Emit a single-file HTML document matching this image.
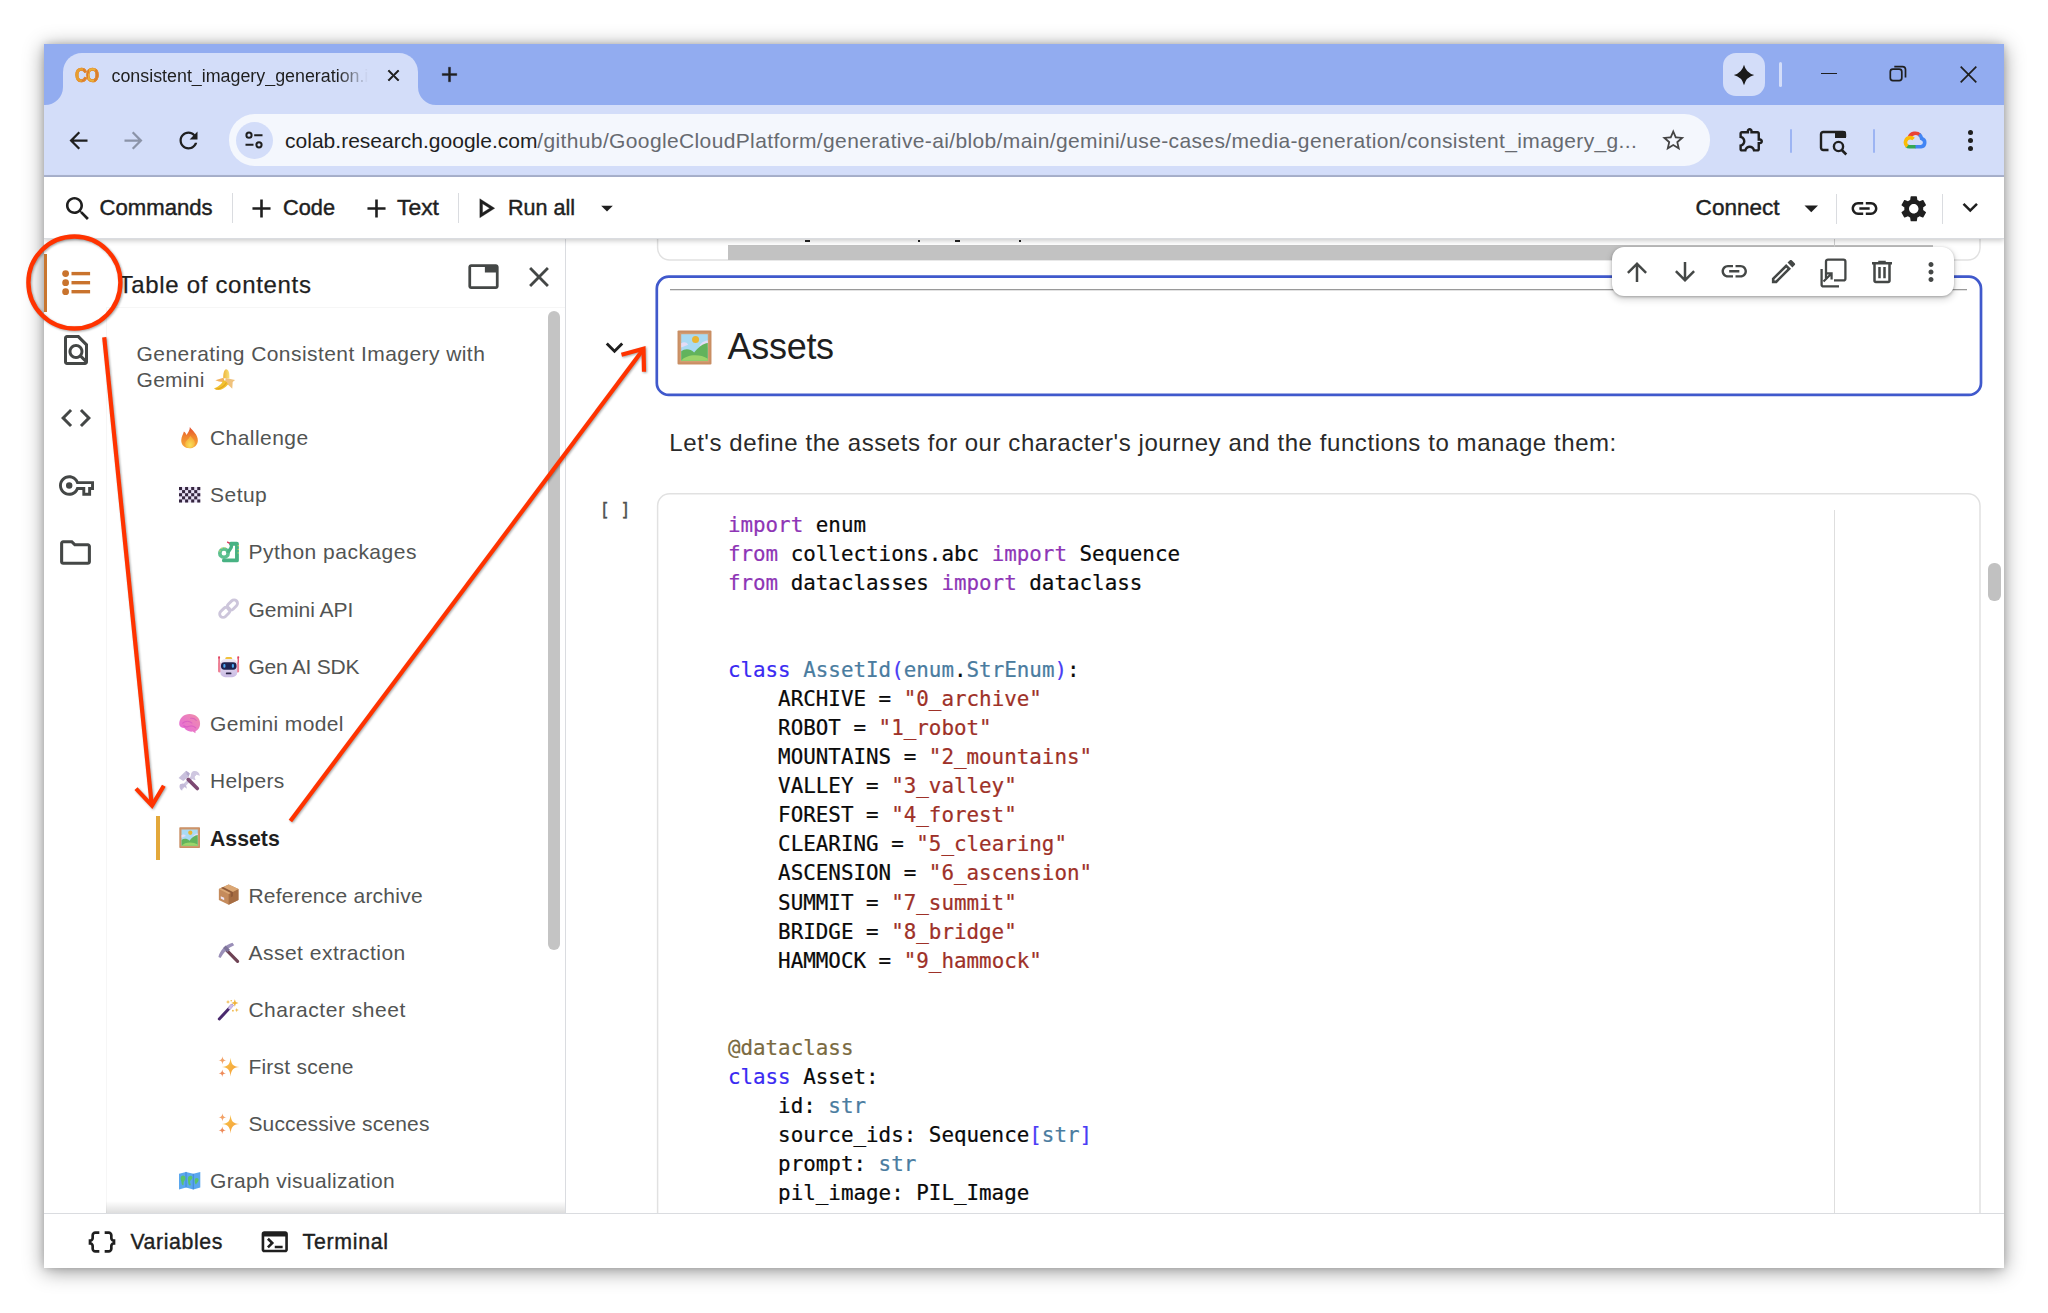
<!DOCTYPE html>
<html>
<head>
<meta charset="utf-8">
<title>consistent_imagery_generation.ipynb - Colab</title>
<style>
*{box-sizing:border-box;margin:0;padding:0}
html,body{width:2048px;height:1313px;background:#fff;overflow:hidden}
body{font-family:"Liberation Sans",sans-serif;color:#1f1f1f;position:relative}
.abs{position:absolute}
#win{position:absolute;left:44px;top:44px;width:1960px;height:1224px;background:#fff;box-shadow:0 3px 19px rgba(0,0,0,.42),0 0 7px rgba(0,0,0,.15)}
#clip{position:absolute;left:0;top:0;width:1960px;height:1224px;overflow:hidden}
#pg{position:absolute;left:-44px;top:-44px;width:2048px;height:1313px}
#ann{position:absolute;left:0;top:0;width:2048px;height:1313px;pointer-events:none}
.t{position:absolute;white-space:pre;line-height:1}
</style>
</head>
<body>
<div id="win"><div id="clip"><div id="pg">
<!-- chrome -->
<div class="abs" style="left:44.00px;top:44.00px;width:1960.00px;height:61.00px;background:#92acf0"></div>
<div class="abs" style="left:44.00px;top:105.00px;width:1960.00px;height:71.00px;background:#d3ddf9"></div>
<div class="abs" style="left:44.00px;top:175.00px;width:1960.00px;height:1.50px;background:#aab3cf"></div>
<div class="abs" style="left:63.00px;top:53.00px;width:355.00px;height:52.00px;background:#d3ddf9;border-radius:19px 19px 0 0"></div>
<svg class="abs" style="left:45px;top:87px" width="18" height="18" viewBox="0 0 18 18"><path fill="#d3ddf9" d="M18 0V18H0A18 18 0 0 0 18 0z"/></svg>
<svg class="abs" style="left:418px;top:87px" width="18" height="18" viewBox="0 0 18 18"><path fill="#d3ddf9" d="M0 0V18H18A18 18 0 0 1 0 0z"/></svg>
<div class="t" style="left:74.60px;top:64.40px;font-size:21.00px;font-weight:700;letter-spacing:-1.500px;transform:scaleX(.80);transform-origin:0 50%;padding-right:4px;-webkit-text-stroke:0.7px #e38a2c;background:linear-gradient(100deg,#e7a12f 0 30%,#dc7d2b 31% 50%,#ebb238 51% 72%,#da7c2d 73%);-webkit-background-clip:text;background-clip:text;color:transparent">CO</div>
<div class="t" style="left:111.50px;top:68.08px;font-size:17.85px;color:#1f1f1f;width:262px;overflow:hidden;-webkit-mask-image:linear-gradient(90deg,#000 0,#000 226px,transparent 256px);mask-image:linear-gradient(90deg,#000 0,#000 226px,transparent 256px)">consistent_imagery_generation.ipynb - Colab</div>
<svg class="abs" style="left:383.50px;top:65.70px" width="19.00" height="19.00" viewBox="0 0 24 24"><path fill="#1f1f1f" stroke="#1f1f1f" stroke-width="0.9" d="M19 6.41L17.59 5 12 10.59 6.41 5 5 6.41 10.59 12 5 17.59 6.41 19 12 13.41 17.59 19 19 17.59 13.41 12z"/></svg>
<svg class="abs" style="left:436.50px;top:62.10px" width="25.00" height="25.00" viewBox="0 0 24 24"><path fill="#1f1f1f" stroke="#1f1f1f" stroke-width="0.35" d="M19 13h-6v6h-2v-6H5v-2h6V5h2v6h6v2z"/></svg>
<div class="abs" style="left:1722.50px;top:53.00px;width:42.50px;height:42.50px;background:#d3ddf9;border-radius:13px"></div>
<svg class="abs" style="left:1732.00px;top:63.00px" width="24.00" height="24.00" viewBox="0 0 24 24"><path fill="#1a1a1a" d="M12 1.8Q14 10 22.2 12Q14 14 12 22.2Q10 14 1.8 12Q10 10 12 1.8z"/></svg>
<div class="abs" style="left:1778.60px;top:62.00px;width:3.20px;height:24.50px;background:#d3ddf9;border-radius:2px"></div>
<div class="abs" style="left:1820.50px;top:72.80px;width:16.00px;height:1.70px;background:#1f1f1f"></div>
<svg class="abs" style="left:1888.00px;top:64.00px" width="20.00" height="20.00" viewBox="0 0 20 20"><rect x="2.3" y="5.2" width="11.5" height="11.5" rx="2.6" fill="none" stroke="#1f1f1f" stroke-width="1.7"/><path d="M6.3 2.6H14.5A3 3 0 0 1 17.5 5.6V13.6" fill="none" stroke="#1f1f1f" stroke-width="1.7"/></svg>
<svg class="abs" style="left:1960.00px;top:66.00px" width="17.00" height="17.00" viewBox="0 0 17 17"><path d="M0.7 0.7L16.3 16.3M16.3 0.7L0.7 16.3" stroke="#1f1f1f" stroke-width="1.7" fill="none"/></svg>
<svg class="abs" style="left:64.50px;top:126.50px" width="27.00" height="27.00" viewBox="0 0 24 24"><path fill="#1f1f1f" d="M20 11H7.83l5.59-5.59L12 4l-8 8 8 8 1.41-1.41L7.83 13H20v-2z"/></svg>
<svg class="abs" style="left:119.50px;top:126.50px" width="27.00" height="27.00" viewBox="0 0 24 24"><path fill="#8b93a8" d="M12 4l-1.41 1.41L16.17 11H4v2h12.17l-5.58 5.59L12 20l8-8z"/></svg>
<svg class="abs" style="left:174.50px;top:126.50px" width="27.00" height="27.00" viewBox="0 0 24 24"><path fill="#1f1f1f" d="M17.65 6.35C16.2 4.9 14.21 4 12 4c-4.42 0-7.99 3.58-7.99 8s3.57 8 7.99 8c3.73 0 6.84-2.55 7.73-6h-2.08c-.82 2.33-3.04 4-5.65 4-3.31 0-6-2.69-6-6s2.69-6 6-6c1.66 0 3.14.69 4.22 1.78L13 11h7V4l-2.35 2.35z"/></svg>
<div class="abs" style="left:229.00px;top:114.40px;width:1481.00px;height:51.40px;background:#f4f7fd;border-radius:25.7px"></div>
<div class="abs" style="left:235.50px;top:121.50px;width:37.00px;height:37.00px;background:#d3ddf9;border-radius:50%"></div>
<svg class="abs" style="left:242.00px;top:128.00px" width="24.00" height="24.00" viewBox="0 0 24 24"><g fill="none" stroke="#1f1f1f" stroke-width="2"><circle cx="7" cy="7.2" r="2.6"/><path d="M12.2 7.2H20.5M3.5 16.8H11.5"/><circle cx="17" cy="16.8" r="2.6"/></g></svg>
<div class="t" style="left:285.00px;top:130.00px;font-size:21.00px;color:#1f1f1f;letter-spacing:0.015px">colab.research.google.com</div>
<div class="t" style="left:537.30px;top:130.00px;font-size:21.00px;color:#676a70;letter-spacing:0.367px">/github/GoogleCloudPlatform/generative-ai/blob/main/gemini/use-cases/media-generation/consistent_imagery_g...</div>
<svg class="abs" style="left:1660.25px;top:127.25px" width="26.50" height="26.50" viewBox="0 0 24 24"><path fill="#444" d="M22 9.24l-7.19-.62L12 2 9.19 8.63 2 9.24l5.46 4.73L5.82 21 12 17.27 18.18 21l-1.63-7.03L22 9.24zM12 15.4l-3.76 2.27 1-4.28-3.32-2.88 4.38-.38L12 6.1l1.71 4.04 4.38.38-3.32 2.88 1 4.28L12 15.4z"/></svg>
<svg class="abs" style="left:1736.50px;top:125.00px" width="29.00" height="29.00" viewBox="0 0 24 24"><path fill="#1f1f1f" d="M10.5 4.5c.28 0 .5.22.5.5v2h6v6h2c.28 0 .5.22.5.5s-.22.5-.5.5h-2v6h-2.12c-.68-1.75-2.39-3-4.38-3s-3.7 1.25-4.38 3H4v-2.12c1.75-.68 3-2.39 3-4.38 0-1.99-1.24-3.7-2.99-4.38L4 7h6V5c0-.28.22-.5.5-.5m0-2C9.12 2.5 8 3.62 8 5H4c-1.1 0-1.99.9-1.99 2v3.8h.29c1.49 0 2.7 1.21 2.7 2.7s-1.21 2.7-2.7 2.7H2V20c0 1.1.9 2 2 2h3.8v-.3c0-1.49 1.21-2.7 2.7-2.7s2.7 1.21 2.7 2.7v.3H17c1.1 0 2-.9 2-2v-4c1.38 0 2.5-1.12 2.5-2.5S20.38 11 19 11V7c0-1.1-.9-2-2-2h-4c0-1.38-1.12-2.5-2.5-2.5z"/></svg>
<div class="abs" style="left:1789.80px;top:129.00px;width:2.60px;height:23.50px;background:#9db4f3;border-radius:1.3px"></div>
<svg class="abs" style="left:1818.00px;top:128.00px" width="30.00" height="28.00" viewBox="0 0 30 28"><path d="M10.5 22H5.2A2.2 2.2 0 0 1 3 19.8V6.2A2.2 2.2 0 0 1 5.2 4H24.8A2.2 2.2 0 0 1 27 6.2V9" fill="none" stroke="#1f1f1f" stroke-width="2.4"/><path d="M17 3H26A2 2 0 0 1 28 5V10H17z" fill="#1f1f1f"/><circle cx="20.5" cy="18.5" r="4.6" fill="none" stroke="#1f1f1f" stroke-width="2.4"/><path d="M23.8 22L28.3 26.5" stroke="#1f1f1f" stroke-width="2.6" fill="none"/></svg>
<div class="abs" style="left:1872.80px;top:129.00px;width:2.60px;height:23.50px;background:#9db4f3;border-radius:1.3px"></div>
<svg class="abs" style="left:1903.00px;top:129.00px" width="24.00" height="20.00" viewBox="0 0 24 20"><g fill="none" stroke-width="3.6" stroke-linecap="butt"><path d="M6.3 8.2A6.6 6.6 0 0 1 17 6.2" stroke="#ea4335"/><path d="M16.2 5.4A6.6 6.6 0 0 1 18.6 9.4 4.3 4.3 0 0 1 18 17.8H12" stroke="#4285f4"/><path d="M12.5 17.8H6.5A4.6 4.6 0 0 1 3.4 16.6" stroke="#34a853"/><path d="M4.3 17.3A4.9 4.9 0 0 1 7 8.6 4.9 4.9 0 0 1 10.6 10" stroke="#fbbc05"/></g></svg>
<div class="abs" style="left:1967.50px;top:130.10px;width:5.00px;height:5.00px;background:#1f1f1f;border-radius:50%"></div>
<div class="abs" style="left:1967.50px;top:137.90px;width:5.00px;height:5.00px;background:#1f1f1f;border-radius:50%"></div>
<div class="abs" style="left:1967.50px;top:145.70px;width:5.00px;height:5.00px;background:#1f1f1f;border-radius:50%"></div>
<!-- sidebar -->
<div class="abs" style="left:44.00px;top:239.00px;width:522.00px;height:974.00px;background:#fff"></div>
<div class="abs" style="left:106.00px;top:307.00px;width:459.50px;height:906.00px;border-left:1px solid #f6f6f6;border-top:1px solid #f6f6f6"></div>
<div class="abs" style="left:565.00px;top:239.00px;width:1.00px;height:974.00px;background:#dadce0"></div>
<div class="abs" style="left:44.20px;top:253.70px;width:3.00px;height:58.00px;background:#c8762f"></div>
<svg class="abs" style="left:60.00px;top:268.00px" width="34.00" height="30.00" viewBox="0 0 34 30"><g fill="#c9732d"><circle cx="5.6" cy="5.6" r="3.4"/><circle cx="5.6" cy="14.7" r="3.4"/><circle cx="5.600000" cy="23.7" r="3.4"/><rect x="11.5" y="3.9" width="18.6" height="3.4"/><rect x="11.5" y="13" width="18.6" height="3.4"/><rect x="11.5" y="22" width="18.6" height="3.4"/></g></svg>
<svg class="abs" style="left:57.70px;top:332.00px" width="36.00" height="36.00" viewBox="0 0 24 24"><path fill="#444746" d="M14 2H6c-1.1 0-1.99.9-1.99 2L4 20c0 1.1.89 2 1.99 2H18c1.1 0 2-.9 2-2V8l-6-6zM6 4h7l5 5v8.58l-1.84-1.84c1.28-1.94 1.07-4.57-.64-6.28C14.55 8.49 13.28 8 12 8c-1.28 0-2.55.49-3.53 1.46-1.95 1.95-1.95 5.11 0 7.05.97.97 2.25 1.46 3.53 1.46.96 0 1.92-.28 2.75-.83L17.6 20H6V4zm8.11 11.1c-.56.56-1.31.88-2.11.88s-1.55-.31-2.11-.88c-.56-.56-.88-1.31-.88-2.11s.31-1.55.88-2.11c.56-.57 1.31-.88 2.11-.88s1.55.31 2.11.88c.56.56.88 1.31.88 2.11s-.31 1.55-.88 2.11z"/></svg>
<svg class="abs" style="left:58.10px;top:399.50px" width="36.00" height="36.00" viewBox="0 0 24 24"><path fill="#444746" d="M9.4 16.6L4.8 12l4.6-4.6L8 6l-6 6 6 6 1.4-1.4zm5.2 0l4.6-4.6-4.6-4.6L16 6l6 6-6 6-1.4-1.4z"/></svg>
<svg class="abs" style="left:58.50px;top:467.50px" width="35.00" height="35.00" viewBox="0 0 24 24"><path fill="#444746" d="M22 19h-6v-4h-2.68c-1.14 2.42-3.6 4-6.32 4-3.86 0-7-3.14-7-7s3.14-7 7-7c2.72 0 5.17 1.58 6.32 4H24v6h-2v4zm-4-2h2v-4h2v-2H11.94l-.23-.67C11.01 8.34 9.11 7 7 7c-2.76 0-5 2.24-5 5s2.24 5 5 5c2.11 0 4.01-1.34 4.71-3.33l.23-.67H18v4zM7 14.2a2.2 2.2 0 1 0 0-4.4 2.2 2.2 0 0 0 0 4.4z"/></svg>
<svg class="abs" style="left:57.20px;top:533.80px" width="37.00" height="37.00" viewBox="0 0 24 24"><path fill="#444746" d="M9.17 6l2 2H20v10H4V6h5.17M10 4H4c-1.1 0-1.99.9-1.99 2L2 18c0 1.1.9 2 2 2h16c1.1 0 2-.9 2-2V8c0-1.1-.9-2-2-2h-8l-2-2z"/></svg>
<div class="t" style="left:118.60px;top:272.60px;font-size:24.00px;color:#1f1f1f;letter-spacing:0.678px;-webkit-text-stroke:0.25px #1f1f1f">Table of contents</div>
<svg class="abs" style="left:467.00px;top:259.70px" width="33.00" height="33.00" viewBox="0 0 24 24"><path fill="#444746" d="M21 3H3c-1.1 0-2 .9-2 2v14c0 1.1.9 2 2 2h18c1.1 0 2-.9 2-2V5c0-1.1-.9-2-2-2zm0 16H3V5h10v4h8v10z"/></svg>
<svg class="abs" style="left:521.70px;top:259.70px" width="34.00" height="34.00" viewBox="0 0 24 24"><path fill="#444746" d="M19 6.41L17.59 5 12 10.59 6.41 5 5 6.41 10.59 12 5 17.59 6.41 19 12 13.41 17.59 19 19 17.59 13.41 12z"/></svg>
<div class="abs" style="left:548.00px;top:310.60px;width:12.00px;height:639.40px;background:#c4c4c4;border-radius:6px"></div>
<div class="abs" style="left:106.00px;top:1201.00px;width:459.00px;height:12.00px;background:linear-gradient(180deg,rgba(0,0,0,0),rgba(0,0,0,.13))"></div>
<div class="t" style="left:136.60px;top:342.80px;font-size:21.00px;color:#525453;letter-spacing:0.436px">Generating Consistent Imagery with</div>
<div class="t" style="left:136.60px;top:369.00px;font-size:21.00px;color:#525453;letter-spacing:0.250px">Gemini</div>
<svg class="abs" style="left:214.20px;top:369.30px;overflow:visible" width="21.50" height="21.50" viewBox="0 0 20 20"><defs><linearGradient id="bn1_1" x1="0" y1="0" x2="1" y2="0"><stop offset="0" stop-color="#eeb53a"/><stop offset="1" stop-color="#f7e07a"/></linearGradient></defs><path d="M8.6 8.6C8.4 4.5 9.3 0.6 11.2 0.3 13.4 0.1 14.6 3.6 14.3 8.8z" fill="url(#bn1_1)"/><path d="M1.2 10.4L8.8 8.200000 10.2 12.4 4.6 11.600000z" fill="#f2b25e"/><path d="M11 8.4L19.600000 10.2 17.4 12.2 17 18.4 13.6 15 10 12.4z" fill="#f0c27c"/><path d="M0 18C2.5 20.8 9 20 13.2 14.200000 12.2 12 10.4 10.6 8.6 10.4 7.6 13.6 4.2 16.4 0 18z" fill="#f1c22f"/><path d="M1.6 18.6C5 19 9.5 16.6 11.6 12.6" fill="none" stroke="#e5a61e" stroke-width="1"/></svg>
<svg class="abs" style="left:179.30px;top:426.90px;overflow:visible" width="21.30" height="21.30" viewBox="0 0 20 20"><defs><linearGradient id="fr1_2" x1="0" y1="0" x2="0" y2="1"><stop offset="0" stop-color="#e24a2e"/><stop offset=".45" stop-color="#f0852f"/><stop offset="1" stop-color="#f6a83a"/></linearGradient><radialGradient id="fr2_2" cx=".5" cy=".75" r=".55"><stop offset="0" stop-color="#f9e05a"/><stop offset="1" stop-color="#f6b23c"/></radialGradient></defs><path d="M10.2 0C12.5 3.5 17.9 7 17.7 12.8 17.5 17 14.2 19.9 9.9 19.9 5.4 19.9 2 16.9 2.1 12.4 2.200000 8.8 4 7 4.6 4.2 6 5 6.600000 6.2 6.9 7.4 8.6 5.4 10.2 3 10.2 0z" fill="url(#fr1_2)"/><path d="M10.6 8.400000C12.6 10.8 15.4 12.6 15 15.8 14.6 18.4 12.6 19.8 10.2 19.8 7.6 19.8 5.6 18 5.8 15.4 6 12.600000 9.400000 11.4 10.6 8.4z" fill="url(#fr2_2)"/></svg>
<div class="t" style="left:210.00px;top:427.10px;font-size:21.00px;color:#525453;letter-spacing:0.441px">Challenge</div>
<svg class="abs" style="left:179.30px;top:484.08px;overflow:visible" width="21.30" height="21.30" viewBox="0 0 20 20"><rect x="0" y="2.8" width="20" height="14.6" fill="#e9e2f6"/><rect x="0.00" y="2.80" width="2.86" height="2.92" fill="#35263f"/><rect x="5.71" y="2.80" width="2.86" height="2.92" fill="#35263f"/><rect x="11.43" y="2.80" width="2.86" height="2.92" fill="#35263f"/><rect x="17.14" y="2.80" width="2.86" height="2.92" fill="#35263f"/><rect x="2.86" y="5.72" width="2.86" height="2.92" fill="#35263f"/><rect x="8.57" y="5.72" width="2.86" height="2.92" fill="#35263f"/><rect x="14.29" y="5.72" width="2.86" height="2.92" fill="#35263f"/><rect x="0.00" y="8.64" width="2.86" height="2.92" fill="#35263f"/><rect x="5.71" y="8.64" width="2.86" height="2.92" fill="#35263f"/><rect x="11.43" y="8.64" width="2.86" height="2.92" fill="#35263f"/><rect x="17.14" y="8.64" width="2.86" height="2.92" fill="#35263f"/><rect x="2.86" y="11.56" width="2.86" height="2.92" fill="#35263f"/><rect x="8.57" y="11.56" width="2.86" height="2.92" fill="#35263f"/><rect x="14.29" y="11.56" width="2.86" height="2.92" fill="#35263f"/><rect x="0.00" y="14.48" width="2.86" height="2.92" fill="#35263f"/><rect x="5.71" y="14.48" width="2.86" height="2.92" fill="#35263f"/><rect x="11.43" y="14.48" width="2.86" height="2.92" fill="#35263f"/><rect x="17.14" y="14.48" width="2.86" height="2.92" fill="#35263f"/></svg>
<div class="t" style="left:210.00px;top:484.28px;font-size:21.00px;color:#525453;letter-spacing:0.480px">Setup</div>
<svg class="abs" style="left:217.50px;top:541.26px;overflow:visible" width="21.30" height="21.30" viewBox="0 0 20 20"><circle cx="5.6" cy="11.4" r="3.9" stroke="#5cc08f" stroke-width="3.4" fill="none"/><path d="M5.5 18.2H17.8V2.6H12" stroke="#48b283" stroke-width="3.6" fill="none" stroke-linejoin="round" stroke-linecap="round"/><path d="M12.8 3.5C13 8 9.8 8.5 9.4 11" stroke="#48b283" stroke-width="3.2" fill="none"/><path d="M11 2.2L8.6 0.8" stroke="#e0325a" stroke-width="1.2" fill="none"/><g fill="#e4d85c"><circle cx="19" cy="4.4" r=".6"/><circle cx="19" cy="7.8" r=".6"/><circle cx="19" cy="11.2" r=".6"/><circle cx="1.8" cy="9.4" r=".6"/><circle cx="3.6" cy="6.800000" r=".6"/><circle cx="6.6" cy="6.3" r=".6"/></g></svg>
<div class="t" style="left:248.40px;top:541.46px;font-size:21.00px;color:#525453;letter-spacing:0.492px">Python packages</div>
<svg class="abs" style="left:217.50px;top:598.44px;overflow:visible" width="21.30" height="21.30" viewBox="0 0 20 20"><g fill="none" stroke="#cdc6db" stroke-width="2.7"><rect x="-3.2" y="-5.5" width="6.4" height="11" rx="3.2" transform="translate(13.5 6.6) rotate(45)"/><rect x="-3.2" y="-5.5" width="6.4" height="11" rx="3.2" transform="translate(6.4 13.4) rotate(45)"/></g></svg>
<div class="t" style="left:248.40px;top:598.64px;font-size:21.00px;color:#525453;letter-spacing:-0.005px">Gemini API</div>
<svg class="abs" style="left:217.50px;top:655.62px;overflow:visible" width="21.30" height="21.30" viewBox="0 0 20 20"><defs><linearGradient id="rb1_6" x1="0" y1="0" x2="0" y2="1"><stop offset="0" stop-color="#efeaf5"/><stop offset="1" stop-color="#c9bae3"/></linearGradient></defs><rect x="0.4" y="1.6" width="1.2" height="13" rx=".6" fill="#e2425f"/><circle cx="1" cy="1.2" r="1" fill="#e2425f"/><rect x="0.2" y="6" width="2.6" height="9.5" rx="1.2" fill="#ee7f95"/><rect x="18.4" y="1.6" width="1.2" height="13" rx=".6" fill="#e2425f"/><circle cx="19" cy="1.2" r="1" fill="#e2425f"/><rect x="17.2" y="6" width="2.6" height="9.5" rx="1.2" fill="#ee7f95"/><rect x="6.8" y="1" width="6.6" height="3.2" rx="1.5" fill="#f0c23e"/><rect x="2.2" y="2.8" width="15.8" height="17.2" rx="4.600000" fill="url(#rb1_6)"/><rect x="2.8" y="5.8" width="14.6" height="7" rx="3.2" fill="#1e2450"/><rect x="5" y="7.600000" width="2" height="3.4" rx=".9" fill="#4ea8f0"/><rect x="13" y="7.6" width="2" height="3.4" rx=".9" fill="#4ea8f0"/><rect x="7.4" y="15.4" width="5.2" height="1.8" rx=".6" fill="#2a2446"/></svg>
<div class="t" style="left:248.40px;top:655.82px;font-size:21.00px;color:#525453;letter-spacing:-0.247px">Gen AI SDK</div>
<svg class="abs" style="left:179.30px;top:712.80px;overflow:visible" width="21.30" height="21.30" viewBox="0 0 20 20"><defs><linearGradient id="br1_7" x1="0" y1="1" x2="1" y2="0"><stop offset="0" stop-color="#e468de"/><stop offset="1" stop-color="#f08fa8"/></linearGradient></defs><path d="M0.2 10.5C0 4.5 5 0.8 10 0.9 15.5 1 20 4.5 19.8 10 19.7 14 17.5 16.2 15.6 16.8L15.4 19 13 17.4C9.5 18 6.5 16.5 5 14.2 2.5 14 0.3 12.6 0.2 10.5z" fill="url(#br1_7)"/><path d="M3.5 9.5C6 7 10 7.2 12 9.4M8 13C10.5 11.6 14 12 15.6 14M4.4 12C5.6 13 7 13.2 8.4 12.800000M11 5C13 4.6 15 5.4 16.2 7" fill="none" stroke="#d556c2" stroke-width="1" stroke-linecap="round" opacity=".7"/></svg>
<div class="t" style="left:210.00px;top:713.00px;font-size:21.00px;color:#525453;letter-spacing:0.350px">Gemini model</div>
<svg class="abs" style="left:179.30px;top:769.98px;overflow:visible" width="21.30" height="21.30" viewBox="0 0 20 20"><path d="M2.600000 16.8L14.6 4.2" stroke="#cfc7e0" stroke-width="2.8" stroke-linecap="round" fill="none"/><path d="M13.2 1.2C16.2 0.2 19.2 2.2 19.6 5.4L16.4 4.4 14.6 6.4 15.6 9.4C12.6 9.6 10.6 7.2 11.2 4.200000 11.4 3 12.2 1.8 13.2 1.2z" fill="#cfc7e0"/><path d="M1 13.4C-0.2 15.4 0.6 18.2 3 19.4L3 16.6 5.2 15.8 7.2 17.6C7.6 15.2 5.8 12.8 3.4 12.6z" fill="#c3b9d8"/><path d="M8.6 8.8L17.2 17.400000" stroke="#7d4a72" stroke-width="3.4" stroke-linecap="round" fill="none"/><path d="M-0.4 7.4L6.6 0.8 10 3 9.2 6 4 10.4z" fill="#c9c0dc"/><path d="M6.6 0.8L10 3 9.2 6 7.2 4z" fill="#b3a8cc"/></svg>
<div class="t" style="left:210.00px;top:770.18px;font-size:21.00px;color:#525453;letter-spacing:0.306px">Helpers</div>
<svg class="abs" style="left:179.30px;top:827.16px;overflow:visible" width="21.30" height="21.30" viewBox="0 0 20 20"><rect x="0.3" y="0.3" width="19.4" height="19.4" rx="0.6" fill="#c98e63"/><rect x="1.5" y="1.5" width="17" height="17" fill="#dba77c" opacity=".6"/><rect x="2.4" y="2.4" width="15.2" height="15.2" fill="#a9daf3"/><path d="M2.4 7.5C4 6.6 5.6 7 6.4 8.4L2.4 10z" fill="#e4dcf6"/><path d="M17.6 6C15.6 6 13.8 7.4 12.8 9L17.6 10z" fill="#e4dcf6"/><circle cx="10.6" cy="5.4" r="2" fill="#e9b532"/><path d="M2.4 12.2C4.4 10.4 7.6 10.6 9.8 12.8 12 10 15 7.6 17.6 7.4V17.6H2.4z" fill="#62b35c"/><path d="M2.4 17.6C5 14 13 13.4 17.6 16.4V17.6z" fill="#9bd46a"/></svg>
<div class="t" style="left:210.00px;top:828.53px;font-size:21.25px;font-weight:700;color:#1f1f1f">Assets</div>
<div class="abs" style="left:155.60px;top:815.60px;width:4.20px;height:44.40px;background:#e3a83a"></div>
<svg class="abs" style="left:217.50px;top:884.34px;overflow:visible" width="21.30" height="21.30" viewBox="0 0 20 20"><path d="M10 0.4L19.2 4.800000V15L10 19.6 0.8 15V4.8z" fill="#c58b5c"/><path d="M10 9.4L19.2 4.8V15L10 19.6z" fill="#a66d43"/><path d="M0.8 4.8L10 9.4 19.2 4.8 10 0.4z" fill="#dba774"/><path d="M4.8 2.9L14 7.4V11.4L12 12.4V8.400000L2.800000 3.8z" fill="#8f5a38"/><path d="M2.6 11.4L5.8 13V15.2L2.6 13.6z" fill="#efe6f7"/></svg>
<div class="t" style="left:248.40px;top:884.54px;font-size:21.00px;color:#525453;letter-spacing:0.236px">Reference archive</div>
<svg class="abs" style="left:217.50px;top:941.52px;overflow:visible" width="21.30" height="21.30" viewBox="0 0 20 20"><path d="M8 7.6L18.4 18.2" stroke="#6e4354" stroke-width="3" stroke-linecap="round" fill="none"/><path d="M0.4 14C1.8 8.4 6.4 2.8 13.6 0.8L15.2 3C9.4 5.4 5.4 9.4 2.4 15z" fill="#9a8fb8"/><path d="M7.2 3.2L11.2 7.200000 8.8 9.6 4.800000 5.6z" fill="#7d7399"/></svg>
<div class="t" style="left:248.40px;top:941.72px;font-size:21.00px;color:#525453;letter-spacing:0.500px">Asset extraction</div>
<svg class="abs" style="left:217.50px;top:998.70px;overflow:visible" width="21.30" height="21.30" viewBox="0 0 20 20"><path d="M1.2 18.8L13 6.2" stroke="#4a2a6e" stroke-width="2.8" stroke-linecap="round" fill="none"/><path d="M11 8.4L13 6.2" stroke="#cdbcea" stroke-width="2.8" stroke-linecap="round" fill="none"/><g fill="#f0b43c"><path d="M15.8 0.2L16.7 2.8 19.3 3.7 16.7 4.6 15.8 7.2 14.9 4.6 12.3 3.7 14.9 2.8z"/><path d="M9.4 0.8L9.9 2.3 11.4 2.8 9.9 3.3 9.400000 4.8 8.9 3.3 7.4 2.8 8.9 2.3z"/><path d="M17.6 8.4L18.1 9.9 19.6 10.4 18.1 10.9 17.6 12.4 17.1 10.9 15.6 10.4 17.1 9.9z"/><circle cx="14" cy="11" r=".8"/><circle cx="12.4" cy="1.6" r=".7"/></g></svg>
<div class="t" style="left:248.40px;top:998.90px;font-size:21.00px;color:#525453;letter-spacing:0.535px">Character sheet</div>
<svg class="abs" style="left:217.50px;top:1055.88px;overflow:visible" width="21.30" height="21.30" viewBox="0 0 20 20"><defs><linearGradient id="sp1_13" x1="0" y1="0" x2="1" y2="1"><stop offset="0" stop-color="#f8c848"/><stop offset="1" stop-color="#f59a3a"/></linearGradient></defs><path d="M11.8 1.6C12.5 8 14 9.600000 20 10.4 14 11.2 12.5 12.8 11.8 19.2 11.1 12.8 9.6 11.2 3.6 10.4 9.6 9.6 11.1 8 11.8 1.6z" fill="url(#sp1_13)"/><path d="M4.2 0.2C4.6 3 5.3 3.700000 8 4.100000 5.3 4.500000 4.6 5.2 4.2 8 3.8 5.2 3.1 4.5 0.4 4.1 3.1 3.7 3.8 3 4.2 0.2z" fill="#f3a267"/><path d="M4 12.6C4.400000 15.2 5 15.8 7.4 16.2 5 16.6 4.4 17.2 4 19.8 3.6 17.2 3 16.6 0.6 16.2 3 15.8 3.6 15.2 4 12.6z" fill="#ee8b5a"/></svg>
<div class="t" style="left:248.40px;top:1056.08px;font-size:21.00px;color:#525453;letter-spacing:0.241px">First scene</div>
<svg class="abs" style="left:217.50px;top:1113.06px;overflow:visible" width="21.30" height="21.30" viewBox="0 0 20 20"><defs><linearGradient id="sp1_14" x1="0" y1="0" x2="1" y2="1"><stop offset="0" stop-color="#f8c848"/><stop offset="1" stop-color="#f59a3a"/></linearGradient></defs><path d="M11.8 1.6C12.5 8 14 9.600000 20 10.4 14 11.2 12.5 12.8 11.8 19.2 11.1 12.8 9.6 11.2 3.6 10.4 9.6 9.6 11.1 8 11.8 1.6z" fill="url(#sp1_14)"/><path d="M4.2 0.2C4.6 3 5.3 3.700000 8 4.100000 5.3 4.500000 4.6 5.2 4.2 8 3.8 5.2 3.1 4.5 0.4 4.1 3.1 3.7 3.8 3 4.2 0.2z" fill="#f3a267"/><path d="M4 12.6C4.400000 15.2 5 15.8 7.4 16.2 5 16.6 4.4 17.2 4 19.8 3.6 17.2 3 16.6 0.6 16.2 3 15.8 3.6 15.2 4 12.6z" fill="#ee8b5a"/></svg>
<div class="t" style="left:248.40px;top:1113.26px;font-size:21.00px;color:#525453;letter-spacing:0.151px">Successive scenes</div>
<svg class="abs" style="left:179.30px;top:1170.24px;overflow:visible" width="21.30" height="21.30" viewBox="0 0 20 20"><path d="M0 3.6L6.6 1.8 13.400000 3.6 20 1.8V16.400000L13.4 18.2 6.6 16.4 0 18.2z" fill="#5aa7ee"/><path d="M6.6 1.8V16.4M13.4 3.6V18.2" stroke="#3f86d6" stroke-width="0.9"/><path d="M2 6C3.8 4.4 5.6 5.2 6 7.2 6.4 9.2 5 9.6 4.400000 11.2 4 12.6 4.8 14 3.6 14.4 2.2 14 2.6 11.6 2 10.2 1.6 8.8 1.2 7 2 6z" fill="#59c36a"/><path d="M9 6.2C10.800000 4.8 12.800000 5.6 12.6 7.6 12.4 9.2 10.6 9.2 10.4 10.8 10.2 12.6 11.8 13.4 10.600000 14.600000 9.2 14.6 8.6 12.8 8.6 11.2 8.6 9.600000 7.800000 7.4 9 6.2z" fill="#59c36a"/><path d="M15.2 8C16.8 6.8 18.6 7.6 18.4 9.6 18.2 11.2 16.4 12.2 16 13.6 14.800000 13 14.4 9.600000 15.2 8z" fill="#59c36a"/></svg>
<div class="t" style="left:210.00px;top:1170.44px;font-size:21.00px;color:#525453;letter-spacing:0.339px">Graph visualization</div>
<!-- main -->
<div class="abs" style="left:566.00px;top:239.00px;width:1438.00px;height:974.00px;background:#fff"></div>
<svg class="abs" style="left:650.00px;top:230.00px" width="1340.00" height="40.00" viewBox="0 0 1340 40"><rect x="7.6" y="-30" width="1322.4" height="60" rx="12" fill="#fff" stroke="#e1e1e1" stroke-width="1.5"/></svg>
<div class="abs" style="left:728.40px;top:245.00px;width:1204.60px;height:15.00px;background:#c2c2c2"></div>
<div class="abs" style="left:1833.50px;top:239.00px;width:1.00px;height:8.00px;background:#d0d0d0"></div>
<div class="abs" style="left:804.50px;top:240.00px;width:5.00px;height:2.00px;background:#222"></div>
<div class="abs" style="left:918.30px;top:240.00px;width:2.20px;height:2.00px;background:#222"></div>
<div class="abs" style="left:955.00px;top:240.00px;width:5.00px;height:2.00px;background:#222"></div>
<div class="abs" style="left:1018.50px;top:240.00px;width:2.00px;height:2.00px;background:#222"></div>
<svg class="abs" style="left:650.00px;top:270.00px" width="1340.00" height="132.00" viewBox="0 0 1340 132"><rect x="6.8" y="6.7" width="1324.2" height="118.2" rx="12" fill="#fff" stroke="#4059cc" stroke-width="2.7"/></svg>
<div class="abs" style="left:670.00px;top:288.60px;width:1296.50px;height:2.40px;border-top:1.3px solid #9a9a9a;border-bottom:1px solid #e2e2e2"></div>
<svg class="abs" style="left:597.20px;top:329.70px" width="35.00" height="35.00" viewBox="0 0 24 24"><path fill="#1f1f1f" d="M16.59 8.59L12 13.17 7.41 8.59 6 10l6 6 6-6z"/></svg>
<svg class="abs" style="left:676.60px;top:329.60px;overflow:visible" width="35.00" height="35.00" viewBox="0 0 20 20"><rect x="0.3" y="0.3" width="19.4" height="19.4" rx="0.6" fill="#c98e63"/><rect x="1.5" y="1.5" width="17" height="17" fill="#dba77c" opacity=".6"/><rect x="2.4" y="2.4" width="15.2" height="15.2" fill="#a9daf3"/><path d="M2.4 7.5C4 6.6 5.6 7 6.4 8.4L2.4 10z" fill="#e4dcf6"/><path d="M17.6 6C15.6 6 13.8 7.4 12.8 9L17.6 10z" fill="#e4dcf6"/><circle cx="10.6" cy="5.4" r="2" fill="#e9b532"/><path d="M2.4 12.2C4.4 10.4 7.6 10.6 9.8 12.8 12 10 15 7.6 17.6 7.4V17.6H2.4z" fill="#62b35c"/><path d="M2.4 17.6C5 14 13 13.4 17.6 16.4V17.6z" fill="#9bd46a"/></svg>
<div class="t" style="left:727.60px;top:329.20px;font-size:36.00px;color:#1f1f1f;letter-spacing:-0.308px">Assets</div>
<div class="t" style="left:669.30px;top:431.10px;font-size:24.00px;color:#2a2a2a;letter-spacing:0.571px">Let's define the assets for our character's journey and the functions to manage them:</div>
<div class="abs" style="left:1612.30px;top:247.10px;width:342.20px;height:48.80px;background:#fff;border-radius:12px;box-shadow:0 1px 3px rgba(0,0,0,.30),0 3px 7px 1px rgba(0,0,0,.14)"></div>
<svg class="abs" style="left:1621.50px;top:256.70px" width="30.00" height="30.00" viewBox="0 0 24 24"><path fill="#444746" d="M4 12l1.41 1.41L11 7.83V20h2V7.83l5.58 5.59L20 12l-8-8-8 8z"/></svg>
<svg class="abs" style="left:1670.20px;top:256.70px" width="30.00" height="30.00" viewBox="0 0 24 24"><path fill="#444746" d="M20 12l-1.41-1.41L13 16.17V4h-2v12.17l-5.58-5.59L4 12l8 8 8-8z"/></svg>
<svg class="abs" style="left:1719.45px;top:256.45px" width="30.50" height="30.50" viewBox="0 0 24 24"><path fill="#444746" d="M3.9 12c0-1.71 1.39-3.1 3.1-3.1h4V7H7c-2.76 0-5 2.24-5 5s2.24 5 5 5h4v-1.9H7c-1.71 0-3.1-1.39-3.1-3.1zM8 13h8v-2H8v2zm9-6h-4v1.9h4c1.71 0 3.1 1.39 3.1 3.1s-1.39 3.1-3.1 3.1h-4V17h4c2.76 0 5-2.24 5-5s-2.24-5-5-5z"/></svg>
<svg class="abs" style="left:1768.00px;top:256.20px" width="31.00" height="31.00" viewBox="0 0 24 24"><path fill="#444746" d="M14.06 9.02l.92.92L5.92 19H5v-.92l9.06-9.06M17.66 3c-.25 0-.51.1-.7.29l-1.83 1.83 3.75 3.75 1.83-1.83c.39-.39.39-1.02 0-1.41l-2.34-2.34c-.2-.2-.45-.29-.71-.29zm-3.6 3.19L3 17.25V21h3.75L17.81 9.94l-3.75-3.75z"/></svg>
<svg class="abs" style="left:1817.50px;top:256.50px" width="30.00" height="31.00" viewBox="0 0 30 31"><g fill="none" stroke="#444746" stroke-width="2.3"><path d="M8 21.5V4.6A2 2 0 0 1 10 2.600000H25.4A2 2 0 0 1 27.4 4.600000V21.4A2 2 0 0 1 25.4 23.400000H16"/><path d="M3.6 12V27.4A2 2 0 0 0 5.6 29.4H21"/><path d="M5.5 24.5L13 17M7.4 16.4H13.600000V22.6" stroke-width="2.2"/></g></svg>
<svg class="abs" style="left:1866.50px;top:256.90px" width="30.00" height="30.00" viewBox="0 0 24 24"><path fill="#444746" d="M7 21q-.825 0-1.412-.587Q5 19.825 5 19V6H4V4h5V3h6v1h5v2h-1v13q0 .825-.587 1.413Q17.825 21 17 21ZM17 6H7v13h10ZM9 17h2V8H9Zm4 0h2V8h-2ZM7 6v13Z"/></svg>
<svg class="abs" style="left:1915.50px;top:256.90px" width="30.00" height="30.00" viewBox="0 0 24 24"><path fill="#444746" d="M12 8c1.1 0 2-.9 2-2s-.9-2-2-2-2 .9-2 2 .9 2 2 2zm0 2c-1.1 0-2 .9-2 2s.9 2 2 2 2-.9 2-2-.9-2-2-2zm0 6c-1.1 0-2 .9-2 2s.9 2 2 2 2-.9 2-2-.9-2-2-2z"/></svg>
<svg class="abs" style="left:650.00px;top:488.00px" width="1340.00" height="780.00" viewBox="0 0 1340 780"><rect x="7.6" y="5.7" width="1322.4" height="800" rx="12" fill="#fff" stroke="#e1e1e1" stroke-width="1.5"/></svg>
<div class="abs" style="left:1833.50px;top:509.50px;width:1.00px;height:720.00px;background:#dedede"></div>
<div class="t" style="left:599.60px;top:502.00px;font-size:17.20px;font-family:'DejaVu Sans Mono','Liberation Mono',monospace;color:#505050;-webkit-text-stroke:0.35px #505050">[ ]</div>
<div class="t" style="left:727.9px;top:514.85px;font-size:20.86px;font-family:'DejaVu Sans Mono','Liberation Mono',monospace;color:#0a0a0a;-webkit-text-stroke:0.22px currentColor"><span style="color:#8e35b6">import</span> enum</div>
<div class="t" style="left:727.9px;top:543.90px;font-size:20.86px;font-family:'DejaVu Sans Mono','Liberation Mono',monospace;color:#0a0a0a;-webkit-text-stroke:0.22px currentColor"><span style="color:#8e35b6">from</span> collections.abc <span style="color:#8e35b6">import</span> Sequence</div>
<div class="t" style="left:727.9px;top:572.95px;font-size:20.86px;font-family:'DejaVu Sans Mono','Liberation Mono',monospace;color:#0a0a0a;-webkit-text-stroke:0.22px currentColor"><span style="color:#8e35b6">from</span> dataclasses <span style="color:#8e35b6">import</span> dataclass</div>
<div class="t" style="left:727.9px;top:660.10px;font-size:20.86px;font-family:'DejaVu Sans Mono','Liberation Mono',monospace;color:#0a0a0a;-webkit-text-stroke:0.22px currentColor"><span style="color:#3a2af2">class</span> <span style="color:#4a7c9f">AssetId</span><span style="color:#4a3df5">(</span><span style="color:#4a7c9f">enum</span>.<span style="color:#4a7c9f">StrEnum</span><span style="color:#4a3df5">)</span>:</div>
<div class="t" style="left:727.9px;top:689.15px;font-size:20.86px;font-family:'DejaVu Sans Mono','Liberation Mono',monospace;color:#0a0a0a;-webkit-text-stroke:0.22px currentColor">    ARCHIVE = <span style="color:#9e3128">"0_archive"</span></div>
<div class="t" style="left:727.9px;top:718.20px;font-size:20.86px;font-family:'DejaVu Sans Mono','Liberation Mono',monospace;color:#0a0a0a;-webkit-text-stroke:0.22px currentColor">    ROBOT = <span style="color:#9e3128">"1_robot"</span></div>
<div class="t" style="left:727.9px;top:747.25px;font-size:20.86px;font-family:'DejaVu Sans Mono','Liberation Mono',monospace;color:#0a0a0a;-webkit-text-stroke:0.22px currentColor">    MOUNTAINS = <span style="color:#9e3128">"2_mountains"</span></div>
<div class="t" style="left:727.9px;top:776.30px;font-size:20.86px;font-family:'DejaVu Sans Mono','Liberation Mono',monospace;color:#0a0a0a;-webkit-text-stroke:0.22px currentColor">    VALLEY = <span style="color:#9e3128">"3_valley"</span></div>
<div class="t" style="left:727.9px;top:805.35px;font-size:20.86px;font-family:'DejaVu Sans Mono','Liberation Mono',monospace;color:#0a0a0a;-webkit-text-stroke:0.22px currentColor">    FOREST = <span style="color:#9e3128">"4_forest"</span></div>
<div class="t" style="left:727.9px;top:834.40px;font-size:20.86px;font-family:'DejaVu Sans Mono','Liberation Mono',monospace;color:#0a0a0a;-webkit-text-stroke:0.22px currentColor">    CLEARING = <span style="color:#9e3128">"5_clearing"</span></div>
<div class="t" style="left:727.9px;top:863.45px;font-size:20.86px;font-family:'DejaVu Sans Mono','Liberation Mono',monospace;color:#0a0a0a;-webkit-text-stroke:0.22px currentColor">    ASCENSION = <span style="color:#9e3128">"6_ascension"</span></div>
<div class="t" style="left:727.9px;top:892.50px;font-size:20.86px;font-family:'DejaVu Sans Mono','Liberation Mono',monospace;color:#0a0a0a;-webkit-text-stroke:0.22px currentColor">    SUMMIT = <span style="color:#9e3128">"7_summit"</span></div>
<div class="t" style="left:727.9px;top:921.55px;font-size:20.86px;font-family:'DejaVu Sans Mono','Liberation Mono',monospace;color:#0a0a0a;-webkit-text-stroke:0.22px currentColor">    BRIDGE = <span style="color:#9e3128">"8_bridge"</span></div>
<div class="t" style="left:727.9px;top:950.60px;font-size:20.86px;font-family:'DejaVu Sans Mono','Liberation Mono',monospace;color:#0a0a0a;-webkit-text-stroke:0.22px currentColor">    HAMMOCK = <span style="color:#9e3128">"9_hammock"</span></div>
<div class="t" style="left:727.9px;top:1037.75px;font-size:20.86px;font-family:'DejaVu Sans Mono','Liberation Mono',monospace;color:#0a0a0a;-webkit-text-stroke:0.22px currentColor"><span style="color:#7a6a40">@dataclass</span></div>
<div class="t" style="left:727.9px;top:1066.80px;font-size:20.86px;font-family:'DejaVu Sans Mono','Liberation Mono',monospace;color:#0a0a0a;-webkit-text-stroke:0.22px currentColor"><span style="color:#3a2af2">class</span> Asset:</div>
<div class="t" style="left:727.9px;top:1095.85px;font-size:20.86px;font-family:'DejaVu Sans Mono','Liberation Mono',monospace;color:#0a0a0a;-webkit-text-stroke:0.22px currentColor">    id: <span style="color:#4a7c9f">str</span></div>
<div class="t" style="left:727.9px;top:1124.90px;font-size:20.86px;font-family:'DejaVu Sans Mono','Liberation Mono',monospace;color:#0a0a0a;-webkit-text-stroke:0.22px currentColor">    source_ids: Sequence<span style="color:#4a3df5">[</span><span style="color:#4a7c9f">str</span><span style="color:#4a3df5">]</span></div>
<div class="t" style="left:727.9px;top:1153.95px;font-size:20.86px;font-family:'DejaVu Sans Mono','Liberation Mono',monospace;color:#0a0a0a;-webkit-text-stroke:0.22px currentColor">    prompt: <span style="color:#4a7c9f">str</span></div>
<div class="t" style="left:727.9px;top:1183.00px;font-size:20.86px;font-family:'DejaVu Sans Mono','Liberation Mono',monospace;color:#0a0a0a;-webkit-text-stroke:0.22px currentColor">    pil_image: PIL_Image</div>
<div class="abs" style="left:1988.40px;top:563.00px;width:12.20px;height:37.70px;background:#c1c1c1;border-radius:6px"></div>
<!-- toolbar -->
<div class="abs" style="left:44.00px;top:176.50px;width:1960.00px;height:62.00px;background:#fff;border-bottom:1px solid #dadce0;box-shadow:0 2px 5px rgba(0,0,0,.2)"></div>
<svg class="abs" style="left:62.05px;top:193.05px" width="31.50" height="31.50" viewBox="0 0 24 24"><path fill="#1f1f1f" d="M15.5 14h-.79l-.28-.27C15.41 12.59 16 11.11 16 9.5 16 5.91 13.09 3 9.5 3S3 5.91 3 9.5 5.91 16 9.5 16c1.61 0 3.09-.59 4.23-1.57l.27.28v.79l5 4.99L20.49 19l-4.99-5zm-6 0C7.01 14 5 11.99 5 9.5S7.01 5 9.5 5 14 7.01 14 9.5 11.99 14 9.5 14z"/></svg>
<div class="t" style="left:99.60px;top:196.65px;font-size:22.10px;-webkit-text-stroke:0.45px #1f1f1f">Commands</div>
<div class="abs" style="left:231.50px;top:193.00px;width:1.00px;height:30.00px;background:#dadce0"></div>
<svg class="abs" style="left:245.50px;top:193.20px" width="31.00" height="31.00" viewBox="0 0 24 24"><path fill="#1f1f1f" d="M19 13h-6v6h-2v-6H5v-2h6V5h2v6h6v2z"/></svg>
<div class="t" style="left:283.00px;top:196.82px;font-size:21.75px;-webkit-text-stroke:0.45px #1f1f1f">Code</div>
<svg class="abs" style="left:360.50px;top:193.20px" width="31.00" height="31.00" viewBox="0 0 24 24"><path fill="#1f1f1f" d="M19 13h-6v6h-2v-6H5v-2h6V5h2v6h6v2z"/></svg>
<div class="t" style="left:397.00px;top:195.75px;font-size:22.90px;-webkit-text-stroke:0.45px #1f1f1f">Text</div>
<div class="abs" style="left:457.50px;top:193.00px;width:1.00px;height:30.00px;background:#dadce0"></div>
<svg class="abs" style="left:469.35px;top:191.75px" width="32.50" height="32.50" viewBox="0 0 24 24"><path fill="#1f1f1f" stroke="#1f1f1f" stroke-width="0.25" d="M10 8.64L15.27 12 10 15.36V8.64M8 5v14l11-7L8 5z"/></svg>
<div class="t" style="left:508.00px;top:198.24px;font-size:21.52px;-webkit-text-stroke:0.45px #1f1f1f">Run all</div>
<svg class="abs" style="left:592.70px;top:193.80px" width="28.00" height="28.00" viewBox="0 0 24 24"><path fill="#1f1f1f" d="M7 10l5 5 5-5z"/></svg>
<div class="t" style="left:1695.60px;top:197.22px;font-size:22.55px;-webkit-text-stroke:0.45px #1f1f1f">Connect</div>
<svg class="abs" style="left:1794.75px;top:191.95px" width="32.50" height="32.50" viewBox="0 0 24 24"><path fill="#1f1f1f" d="M7 10l5 5 5-5z"/></svg>
<div class="abs" style="left:1836.00px;top:193.50px;width:1.00px;height:30.00px;background:#dadce0"></div>
<svg class="abs" style="left:1849.10px;top:192.50px" width="31.00" height="31.00" viewBox="0 0 24 24"><path fill="#1f1f1f" d="M3.9 12c0-1.71 1.39-3.1 3.1-3.1h4V7H7c-2.76 0-5 2.24-5 5s2.24 5 5 5h4v-1.9H7c-1.71 0-3.1-1.39-3.1-3.1zM8 13h8v-2H8v2zm9-6h-4v1.9h4c1.71 0 3.1 1.39 3.1 3.1s-1.39 3.1-3.1 3.1h-4V17h4c2.76 0 5-2.24 5-5s-2.24-5-5-5z"/></svg>
<svg class="abs" style="left:1898.15px;top:192.55px" width="31.50" height="31.50" viewBox="0 0 24 24"><path fill="#1f1f1f" d="M19.14 12.94c.04-.3.06-.61.06-.94 0-.32-.02-.64-.07-.94l2.03-1.58c.18-.14.23-.41.12-.61l-1.92-3.32c-.12-.22-.37-.29-.59-.22l-2.39.96c-.5-.38-1.03-.7-1.62-.94l-.36-2.54c-.04-.24-.24-.41-.48-.41h-3.84c-.24 0-.43.17-.47.41l-.36 2.54c-.59.24-1.13.57-1.62.94l-2.39-.96c-.22-.08-.47 0-.59.22L2.74 8.87c-.12.21-.08.47.12.61l2.03 1.58c-.05.3-.09.63-.09.94s.02.64.07.94l-2.03 1.58c-.18.14-.23.41-.12.61l1.92 3.32c.12.22.37.29.59.22l2.39-.96c.5.38 1.03.7 1.62.94l.36 2.54c.05.24.24.41.48.41h3.84c.24 0 .44-.17.47-.41l.36-2.54c.59-.24 1.13-.56 1.62-.94l2.39.96c.22.08.47 0 .59-.22l1.92-3.32c.12-.22.07-.47-.12-.61l-2.01-1.58zM12 15.6c-1.98 0-3.6-1.62-3.6-3.6s1.62-3.6 3.6-3.6 3.6 1.62 3.6 3.6-1.62 3.6-3.6 3.6z"/></svg>
<div class="abs" style="left:1942.00px;top:193.50px;width:1.00px;height:30.00px;background:#dadce0"></div>
<svg class="abs" style="left:1954.75px;top:192.45px" width="30.50" height="30.50" viewBox="0 0 24 24"><path fill="#1f1f1f" d="M16.59 8.59L12 13.17 7.41 8.59 6 10l6 6 6-6z"/></svg>
<!-- bottom -->
<div class="abs" style="left:44.00px;top:1213.00px;width:1960.00px;height:55.00px;background:#fff;border-top:1px solid #dadce0"></div>
<svg class="abs" style="left:86.30px;top:1225.50px" width="32.00" height="32.00" viewBox="0 0 24 24"><path fill="#1f1f1f" d="M4 7v2c0 .55-.45 1-1 1H2v4h1c.55 0 1 .45 1 1v2c0 1.65 1.35 3 3 3h3v-2H7c-.55 0-1-.45-1-1v-2c0-1.3-.84-2.42-2-2.83v-.34C5.16 11.42 6 10.3 6 9V7c0-.55.45-1 1-1h3V4H7C5.35 4 4 5.35 4 7zm17 3c-.55 0-1-.45-1-1V7c0-1.65-1.35-3-3-3h-3v2h3c.55 0 1 .45 1 1v2c0 1.3.84 2.42 2 2.83v.34c-1.16.41-2 1.52-2 2.83v2c0 .55-.45 1-1 1h-3v2h3c1.65 0 3-1.35 3-3v-2c0-.55.45-1 1-1h1v-4h-1z"/></svg>
<div class="t" style="left:130.40px;top:1231.75px;font-size:21.30px;letter-spacing:0.597px;-webkit-text-stroke:0.4px #1f1f1f">Variables</div>
<svg class="abs" style="left:259.05px;top:1226.45px" width="31.50" height="31.50" viewBox="0 0 24 24"><path fill="#1f1f1f" d="M20 4H4c-1.11 0-2 .9-2 2v12c0 1.1.89 2 2 2h16c1.1 0 2-.9 2-2V6c0-1.1-.89-2-2-2zm0 14H4V8h16v10zm-2-1h-6v-2h6v2zM7.5 17l-1.41-1.41L8.67 13l-2.59-2.59L7.5 9l4 4-4 4z"/></svg>
<div class="t" style="left:302.60px;top:1231.75px;font-size:21.30px;letter-spacing:0.701px;-webkit-text-stroke:0.4px #1f1f1f">Terminal</div>
</div></div></div>
<div id="ann">
<svg class="abs" style="left:0;top:0;filter:drop-shadow(1.5px 1.5px 1.2px rgba(0,0,0,.35))" width="2048" height="1313" viewBox="0 0 2048 1313"><g fill="none" stroke="#ff3300" stroke-width="4.2"><circle cx="74.4" cy="282.5" r="46" stroke-width="4.4"/><path d="M104.2 337.3L151.5 803"/><path d="M136 788.6L152 805.6 163.800000 785.7" stroke-linejoin="miter"/><path d="M290.4 821L642.4 350.600000"/><path d="M621.5 354.7L643.5 348.8 644 371.8" stroke-linejoin="miter"/></g></svg>
</div>
</body>
</html>
